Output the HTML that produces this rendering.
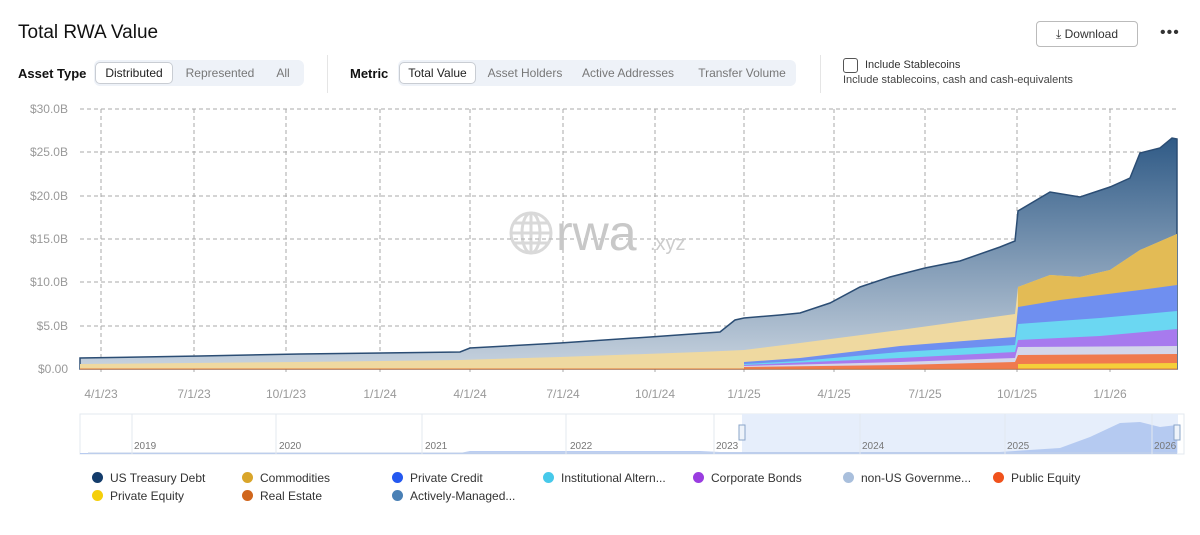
<!DOCTYPE html>
<html><head><meta charset="utf-8"><style>
body{margin:0;width:1200px;height:535px;background:#fff;font-family:"Liberation Sans",sans-serif;position:relative;overflow:hidden;color:#222}
.a{position:absolute}
.seg{position:absolute;height:26px;background:#eef2f8;border-radius:6px}
.seg span{position:absolute;top:3px;height:20px;line-height:20px;font-size:12px;color:#777;text-align:center}
.seg span.on{background:#fff;border:1px solid #c9cdd3;border-radius:5px;color:#222;top:2px}
.lab{font-size:13px;font-weight:bold;color:#111}
.lg{position:absolute;font-size:12px;color:#333}
.lg i{position:absolute;left:-18px;top:1px;width:11px;height:11px;border-radius:50%}
</style></head><body>
<div class="a" style="left:18px;top:22px;font-size:19px;color:#111">Total RWA Value</div>
<div class="a" style="left:1036px;top:21px;width:100px;height:24px;border:1px solid #bbb;border-radius:4px;font-size:12px;line-height:24px;text-align:center;color:#333">⤓ Download</div>
<div class="a" style="left:1160px;top:24px;font-size:16px;letter-spacing:1px;color:#333">•••</div>
<div class="a lab" style="left:18px;top:66px">Asset Type</div>
<div class="seg" style="left:94px;top:60px;width:210px"><span class="on" style="left:1px;width:76px">Distributed</span><span style="left:84px;width:84px">Represented</span><span style="left:174px;width:30px">All</span></div>
<div class="a" style="left:327px;top:55px;width:1px;height:38px;background:#e5e5e5"></div>
<div class="a lab" style="left:350px;top:66px">Metric</div>
<div class="seg" style="left:398px;top:60px;width:398px"><span class="on" style="left:1px;width:75px">Total Value</span><span style="left:84px;width:86px">Asset Holders</span><span style="left:180px;width:100px">Active Addresses</span><span style="left:294px;width:100px">Transfer Volume</span></div>
<div class="a" style="left:820px;top:55px;width:1px;height:38px;background:#e5e5e5"></div>
<div class="a" style="left:843px;top:58px;width:13px;height:13px;border:1.5px solid #555;border-radius:3px"></div>
<div class="a" style="left:865px;top:59px;font-size:11px;color:#333">Include Stablecoins</div>
<div class="a" style="left:843px;top:74px;font-size:11px;color:#444">Include stablecoins, cash and cash-equivalents</div>
<svg class="a" style="left:0;top:95px" width="1200" height="320" viewBox="0 95 1200 320">
<defs><linearGradient id="g" x1="0" y1="0" x2="0" y2="1"><stop offset="0" stop-color="#2f5a86"/><stop offset="1" stop-color="#c8d3df"/></linearGradient></defs>
<g font-size="12" fill="#999" text-anchor="end"><text x="68" y="113">$30.0B</text><text x="68" y="156">$25.0B</text><text x="68" y="200">$20.0B</text><text x="68" y="243">$15.0B</text><text x="68" y="286">$10.0B</text><text x="68" y="330">$5.0B</text><text x="68" y="373">$0.00</text></g>
<g stroke="#aaa" stroke-dasharray="4,3" stroke-width="1"><path d="M80 109H1177M80 152H1177M80 196H1177M80 239H1177M80 282H1177M80 326H1177"/><path d="M101 109V375M194 109V375M286 109V375M380 109V375M470 109V375M563 109V375M655 109V375M744 109V375M834 109V375M925 109V375M1017 109V375M1110 109V375"/></g>
<path d="M80 369 L80 358 200 356 300 354 460 352 470 348 560 343 650 337 720 332 735 320 744 318 780 315 800 313 830 303 860 287 890 277 925 268 960 261 1000 247 1015 241 1018 211 1050 192 1080 197 1110 187 1130 178 1140 153 1160 148 1172 138 1177 139 L1177 369Z" fill="url(#g)" stroke="#2b4d74" stroke-width="1.5"/>
<path d="M80 369 L80 364 300 362 460 360 560 357 700 352 744 350 800 343 900 330 1015 314 1018 287 1050 275 1080 277 1110 270 1140 250 1177 234 L1177 369Z" fill="#efd9a0"/>
<path d="M1018 369 L1018 287 1050 275 1080 277 1110 270 1140 250 1177 234 L1177 369Z" fill="#e3bb55"/>
<path d="M744 369 L744 362 800 358 900 346 1015 337 1018 307 1060 300 1100 295 1140 290 1177 285 L1177 369Z" fill="#6f8ff0"/>
<path d="M744 369 L744 364 800 361 900 352 1015 345 1018 324 1100 318 1177 311 L1177 369Z" fill="#6bd7f2"/>
<path d="M744 369 L744 365 900 358 1015 352 1018 340 1100 336 1177 329 L1177 369Z" fill="#a77aee"/>
<path d="M744 369 L744 366 900 362 1015 358 1018 347 1177 346 L1177 369Z" fill="#d4d6ea"/>
<path d="M744 369 L744 367 900 365 1015 362 1018 355 1177 354 L1177 369Z" fill="#f07a4e"/>
<path d="M1018 369 L1018 364 1177 363 L1177 369Z" fill="#f5cf3a"/>
<path d="M80 369H1177" stroke="#e07a3a" stroke-width="1"/>
<g opacity="0.55" fill="none" stroke="#bbb" stroke-width="3"><circle cx="531" cy="233" r="20"/><ellipse cx="531" cy="233" rx="9" ry="20"/><path d="M511 233H551M514 223H548M514 243H548M531 213V253"/></g>
<text x="556" y="250" font-size="50" fill="#c8c8c8">rwa</text><text x="650" y="250" font-size="20" fill="#ccc">.xyz</text>
<g font-size="12" fill="#999" text-anchor="middle"><text x="101" y="398">4/1/23</text><text x="194" y="398">7/1/23</text><text x="286" y="398">10/1/23</text><text x="380" y="398">1/1/24</text><text x="470" y="398">4/1/24</text><text x="563" y="398">7/1/24</text><text x="655" y="398">10/1/24</text><text x="744" y="398">1/1/25</text><text x="834" y="398">4/1/25</text><text x="925" y="398">7/1/25</text><text x="1017" y="398">10/1/25</text><text x="1110" y="398">1/1/26</text></g>
</svg>
<svg class="a" style="left:0;top:412px" width="1200" height="45">
<rect x="80" y="2" width="1104" height="40" fill="#fff" stroke="#e3e8ef"/>
<rect x="742" y="2" width="436" height="40" fill="#e6eefb"/>
<path d="M80 41H460L470 39H700L720 40H1000L1060 36 1090 25 1120 11 1140 10 1160 15 1177 13V42H80Z" fill="#a9c1ef" opacity="0.8"/>
<path d="M88 41H1177" stroke="#c5d3e8"/>
<g stroke="#e3e8ef"><path d="M132 2V42M276 2V42M422 2V42M566 2V42M714 2V42M860 2V42M1005 2V42M1152 2V42"/></g>
<g font-size="10" fill="#777"><text x="134" y="37">2019</text><text x="279" y="37">2020</text><text x="425" y="37">2021</text><text x="570" y="37">2022</text><text x="716" y="37">2023</text><text x="862" y="37">2024</text><text x="1007" y="37">2025</text><text x="1154" y="37">2026</text></g>
<rect x="739" y="13" width="6" height="15" fill="#eef3fa" stroke="#8aa4c8"/><rect x="1174" y="13" width="6" height="15" fill="#eef3fa" stroke="#8aa4c8"/>
</svg>
<div class="lg" style="left:110px;top:471px"><i style="background:#133c6b"></i>US Treasury Debt</div>
<div class="lg" style="left:260px;top:471px"><i style="background:#d9a52a"></i>Commodities</div>
<div class="lg" style="left:410px;top:471px"><i style="background:#2458f0"></i>Private Credit</div>
<div class="lg" style="left:561px;top:471px"><i style="background:#47c9ea"></i>Institutional Altern...</div>
<div class="lg" style="left:711px;top:471px"><i style="background:#9a3de0"></i>Corporate Bonds</div>
<div class="lg" style="left:861px;top:471px"><i style="background:#a9bfdc"></i>non-US Governme...</div>
<div class="lg" style="left:1011px;top:471px"><i style="background:#f0521c"></i>Public Equity</div>
<div class="lg" style="left:110px;top:489px"><i style="background:#f5cf0a"></i>Private Equity</div>
<div class="lg" style="left:260px;top:489px"><i style="background:#d0661c"></i>Real Estate</div>
<div class="lg" style="left:410px;top:489px"><i style="background:#4a80b5"></i>Actively-Managed...</div>
</body></html>
